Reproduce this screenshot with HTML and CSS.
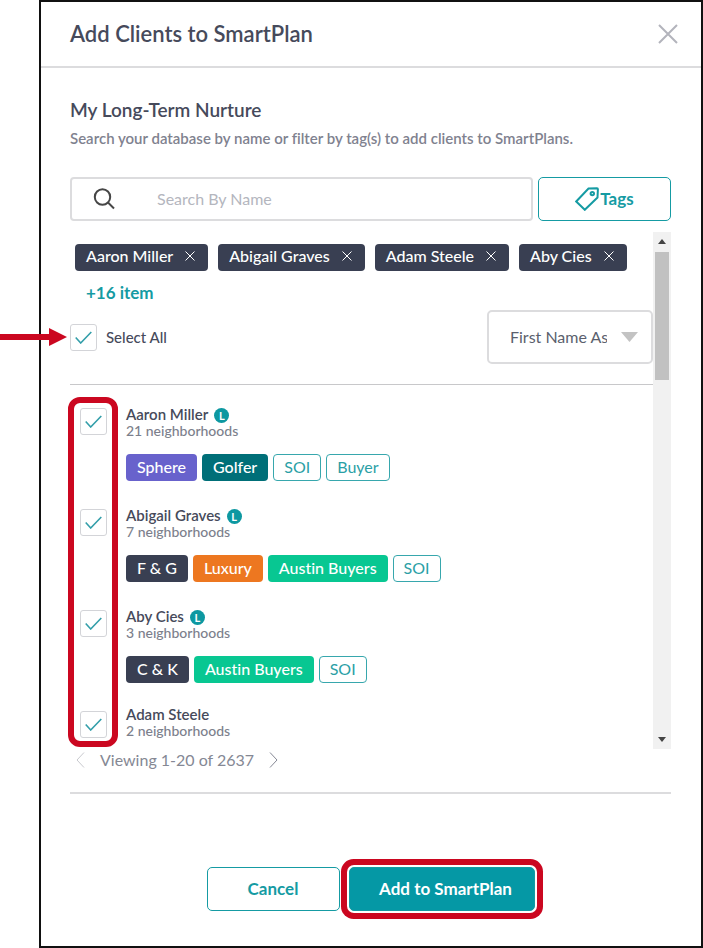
FILE: index.html
```html
<!DOCTYPE html>
<html lang="en">
<head>
<meta charset="utf-8">
<title>Add Clients to SmartPlan</title>
<link rel="stylesheet" href="styles.css">
</head>
<body>
<main class="dialog">
  <header class="dialog-header">
    <h1>Add Clients to SmartPlan</h1>
    <button class="icon-button" aria-label="Close">
      <svg width="20" height="20" viewBox="0 0 20 20"><path d="M1 1l18 18M19 1L1 19"/></svg>
    </button>
  </header>

  <div class="dialog-body">
    <h2>My Long-Term Nurture</h2>
    <p class="hint">Search your database by name or filter by tag(s) to add clients to SmartPlans.</p>

    <div class="search-row">
      <label class="search">
        <svg width="22" height="22" viewBox="0 0 22 22"><circle cx="9.500" cy="9" r="7.7"/><path d="M15 14.5l6 6"/></svg>
        <input type="text" placeholder="Search By Name" aria-label="Search By Name">
      </label>
      <button class="button tags-button">
        <svg width="24" height="24" viewBox="0 0 24 24"><path d="M1.200 14.500L13.500 1.500L22 1.200Q22.900 1.200 22.900 2.200L22.500 10.500L9.800 22.800Z"/><circle cx="17.300" cy="6.600" r="1.700"/></svg>Tags
      </button>
    </div>

    <div class="scroller">
      <div class="scroller-content">
        <div class="chips">
          <button class="chip">Aaron Miller<svg width="10" height="10" viewBox="0 0 10 10"><path d="M.5.5l9 9M9.500.5l-9 9"/></svg></button>
          <button class="chip">Abigail Graves<svg width="10" height="10" viewBox="0 0 10 10"><path d="M.5.5l9 9M9.500.5l-9 9"/></svg></button>
          <button class="chip">Adam Steele<svg width="10" height="10" viewBox="0 0 10 10"><path d="M.5.5l9 9M9.500.5l-9 9"/></svg></button>
          <button class="chip">Aby Cies<svg width="10" height="10" viewBox="0 0 10 10"><path d="M.5.5l9 9M9.500.5l-9 9"/></svg></button>
        </div>
        <a class="more" href="#">+16 item</a>

        <div class="list-tools">
          <svg class="arrow" width="67" height="18" viewBox="0 0 67 18"><path d="M0 6h49V0l18 9-18 9v-6H0z"/></svg>
          <label class="select-all"><input type="checkbox" checked>Select All</label>
          <select aria-label="Sort by">
            <option>First Name Ascending</option>
            <option>First Name Descending</option>
          </select>
        </div>

        <div class="clients-frame">
          <ul class="clients">
            <li>
              <input type="checkbox" id="c1" checked>
              <div>
                <label class="name" for="c1">Aaron Miller<span class="badge">L</span></label>
                <div class="areas">21 neighborhoods</div>
                <div class="tags"><span class="tag violet">Sphere</span><span class="tag teal">Golfer</span><span class="tag">SOI</span><span class="tag">Buyer</span></div>
              </div>
            </li>
            <li>
              <input type="checkbox" id="c2" checked>
              <div>
                <label class="name" for="c2">Abigail Graves<span class="badge">L</span></label>
                <div class="areas">7 neighborhoods</div>
                <div class="tags"><span class="tag navy">F &amp; G</span><span class="tag orange">Luxury</span><span class="tag green">Austin Buyers</span><span class="tag">SOI</span></div>
              </div>
            </li>
            <li>
              <input type="checkbox" id="c3" checked>
              <div>
                <label class="name" for="c3">Aby Cies<span class="badge">L</span></label>
                <div class="areas">3 neighborhoods</div>
                <div class="tags"><span class="tag navy">C &amp; K</span><span class="tag green">Austin Buyers</span><span class="tag">SOI</span></div>
              </div>
            </li>
            <li>
              <input type="checkbox" id="c4" checked>
              <div>
                <label class="name plain" for="c4">Adam Steele</label>
                <div class="areas">2 neighborhoods</div>
              </div>
            </li>
          </ul>
          <div class="highlight"></div>
        </div>
      </div>
      <div class="scrollbar" aria-hidden="true">
        <svg width="8" height="5" viewBox="0 0 8 5"><path d="M0 5l4-5 4 5z"/></svg>
        <div class="thumb"></div>
        <svg width="8" height="5" viewBox="0 0 8 5"><path d="M0 0l4 5 4-5z"/></svg>
      </div>
    </div>

    <nav class="pager" aria-label="Pages">
      <button class="page-button previous" aria-label="Previous page"><svg width="9" height="16" viewBox="0 0 9 16"><path d="M8 .5L1 8l7 7.500"/></svg></button>
      <span>Viewing 1-20 of 2637</span>
      <button class="page-button" aria-label="Next page"><svg width="9" height="16" viewBox="0 0 9 16"><path d="M1 .5L8 8l-7 7.500"/></svg></button>
    </nav>

    <footer class="actions">
      <button class="button cancel">Cancel</button>
      <button class="button primary">Add to SmartPlan</button>
    </footer>
  </div>
</main>
</body>
</html>
```

FILE: styles.css
```css
* {
  box-sizing: border-box;
}

body {
  margin: 0;
  background: #fff;
  color: #464a5b;
  font-family: Lato, "Open Sans", sans-serif;
  font-size: 16px;
  font-variant-ligatures: none;
  line-height: 20px;
}

button,
input,
select {
  margin: 0;
  font: inherit;
  font-variant-ligatures: none;
}

svg {
  flex: none;
  fill: none;
  stroke: currentColor;
}

.dialog {
  min-height: 100vh;
  margin-left: 39px;
  border: 2px solid #111;
}

.dialog-header {
  display: flex;
  align-items: center;
  justify-content: space-between;
  height: 66px;
  padding: 0 23px 0 29px;
  border-bottom: 2px solid #dcdcde;
}

h1 {
  margin: 0;
  font-size: 22px;
  font-weight: 600;
  line-height: 28px;
}

.icon-button,
.page-button {
  display: flex;
  padding: 0;
  border: 0;
  background: none;
  color: #b3b4bc;
}

.icon-button svg {
  stroke-width: 2;
}

.dialog-body {
  padding: 30px 30px 0 29px;
}

h2 {
  margin: 0;
  font-size: 19px;
  font-weight: 600;
  line-height: 24px;
}

.hint {
  margin: 6px 0 0;
  color: #7f828f;
  font-size: 15px;
  font-weight: 600;
}

.search-row {
  display: flex;
  gap: 5px;
  margin-top: 29px;
}

.search {
  display: flex;
  flex: 1;
  align-items: center;
  gap: 42px;
  height: 44px;
  padding: 0 21px;
  border: 2px solid #dcdcde;
  border-radius: 4px;
}

.search svg {
  color: #464646;
  stroke-width: 2;
}

.search input {
  flex: 1;
  min-width: 0;
  padding: 0;
  border: 0;
  outline: 0;
}

.search input::placeholder {
  color: #b4b6be;
}

.button {
  display: flex;
  align-items: center;
  justify-content: center;
  width: 133px;
  height: 44px;
  padding: 0;
  border: 1px solid #159ba3;
  border-radius: 5px;
  background: #fff;
  color: #159ba3;
  font-size: 17px;
  font-weight: 700;
}

.tags-button {
  gap: 1px;
}

.tags-button svg {
  stroke-width: 2;
}

.scroller {
  display: flex;
  margin-top: 11px;
}

.scroller-content {
  flex: 1;
  min-width: 0;
}

.chips {
  display: flex;
  gap: 10px;
  padding: 12px 5px 0;
}

.chip {
  display: flex;
  align-items: center;
  gap: 12px;
  height: 27px;
  padding: 0 13px 3px 11px;
  border: 0;
  border-radius: 4px;
  background: #393f52;
  color: #fff;
  font-weight: 500;
  white-space: nowrap;
}

.more {
  display: inline-block;
  margin: 12px 0 0 16px;
  color: #159ba3;
  font-size: 17px;
  font-weight: 700;
  text-decoration: none;
}

.list-tools {
  display: flex;
  position: relative;
  align-items: center;
  justify-content: space-between;
  margin-top: 7px;
  padding-bottom: 20px;
  border-bottom: 1px solid #c8c8ca;
}

.arrow {
  position: absolute;
  top: 18px;
  right: 100%;
  margin-right: 3px;
  fill: #cb0720;
  stroke: none;
}

.select-all {
  display: flex;
  align-items: center;
  gap: 9px;
  font-size: 15px;
  font-weight: 500;
}

input[type="checkbox"] {
  flex: none;
  width: 27px;
  height: 27px;
  border: 1px solid #d3d4d8;
  border-radius: 3px;
  appearance: none;
  background: #fff url("data:image/svg+xml,%3Csvg xmlns='http://www.w3.org/2000/svg' width='17' height='13' fill='none' stroke='%23349faa' stroke-width='1.600'%3E%3Cpath d='M.7 6.500l5 5.500L16.300 1'/%3E%3C/svg%3E") center no-repeat;
}

select {
  width: 166px;
  height: 54px;
  padding: 0 44px 0 21px;
  border: 2px solid #dcdcde;
  border-radius: 5px;
  appearance: none;
  background: #fff url("data:image/svg+xml,%3Csvg xmlns='http://www.w3.org/2000/svg' width='17' height='10' fill='%23c3c3c3'%3E%3Cpath d='M0 0h17L8.500 10z'/%3E%3C/svg%3E") right 13px center no-repeat;
  color: #5b5f6e;
}

.clients-frame {
  position: relative;
  height: 364px;
}

.clients {
  height: 100%;
  margin: 0;
  padding: 19px 0 0 10px;
  overflow: hidden;
  list-style: none;
}

.clients li {
  display: flex;
  gap: 19px;
  height: 101px;
}

.clients input {
  margin-top: 4px;
}

.name {
  display: flex;
  align-items: flex-end;
  gap: 6px;
  height: 18px;
  font-size: 15px;
  font-weight: 600;
  line-height: 15px;
}

.name.plain {
  height: 15px;
}

.badge {
  width: 15px;
  height: 15px;
  margin-bottom: -1px;
  border-radius: 50%;
  background: #0d98a1;
  color: #fff;
  font-size: 11px;
  font-weight: 700;
  text-align: center;
}

.areas {
  color: #7c7f8c;
  font-size: 14px;
  font-weight: 500;
  line-height: 17px;
}

.tags {
  display: flex;
  gap: 5px;
  margin-top: 15px;
}

.tag {
  height: 27px;
  padding: 1px 10px 0;
  border: 1px solid #37a7ad;
  border-radius: 4px;
  color: #2b9fa6;
  line-height: 22px;
  white-space: nowrap;
}

.violet,
.teal,
.navy,
.orange,
.green {
  border-color: transparent;
  color: #fff;
  font-weight: 500;
}

.violet {
  background-color: #6862cc;
}

.teal {
  background-color: #006f78;
}

.navy {
  background-color: #393f52;
}

.orange {
  background-color: #ed7720;
}

.green {
  background-color: #08c792;
}

.highlight {
  position: absolute;
  top: 12px;
  bottom: 2px;
  left: -2px;
  width: 50px;
  border: 6px solid #cb0720;
  border-radius: 12px;
  pointer-events: none;
}

.scrollbar {
  display: flex;
  flex-direction: column;
  align-items: center;
  width: 18px;
  padding: 7px 0;
  background: #f1f1f1;
}

.scrollbar svg {
  fill: #444;
  stroke: none;
}

.thumb {
  width: 14px;
  height: 128px;
  margin: 8px 0 auto;
  background: #c1c1c1;
}

.pager {
  display: flex;
  align-items: center;
  gap: 15px;
  padding: 1px 6px 22px;
  border-bottom: 2px solid #dcdcde;
  color: #858894;
}

.page-button {
  color: #858894;
}

.page-button.previous {
  color: #c8c9ce;
}

.actions {
  display: flex;
  justify-content: center;
  gap: 9px;
  padding: 73px 0 32px;
}

.primary {
  width: 186px;
  padding-left: 8px;
  background: #0598a5;
  box-shadow: 0 0 0 2px #fff, 0 0 0 8px #cb0720;
  color: #fff;
}
```
